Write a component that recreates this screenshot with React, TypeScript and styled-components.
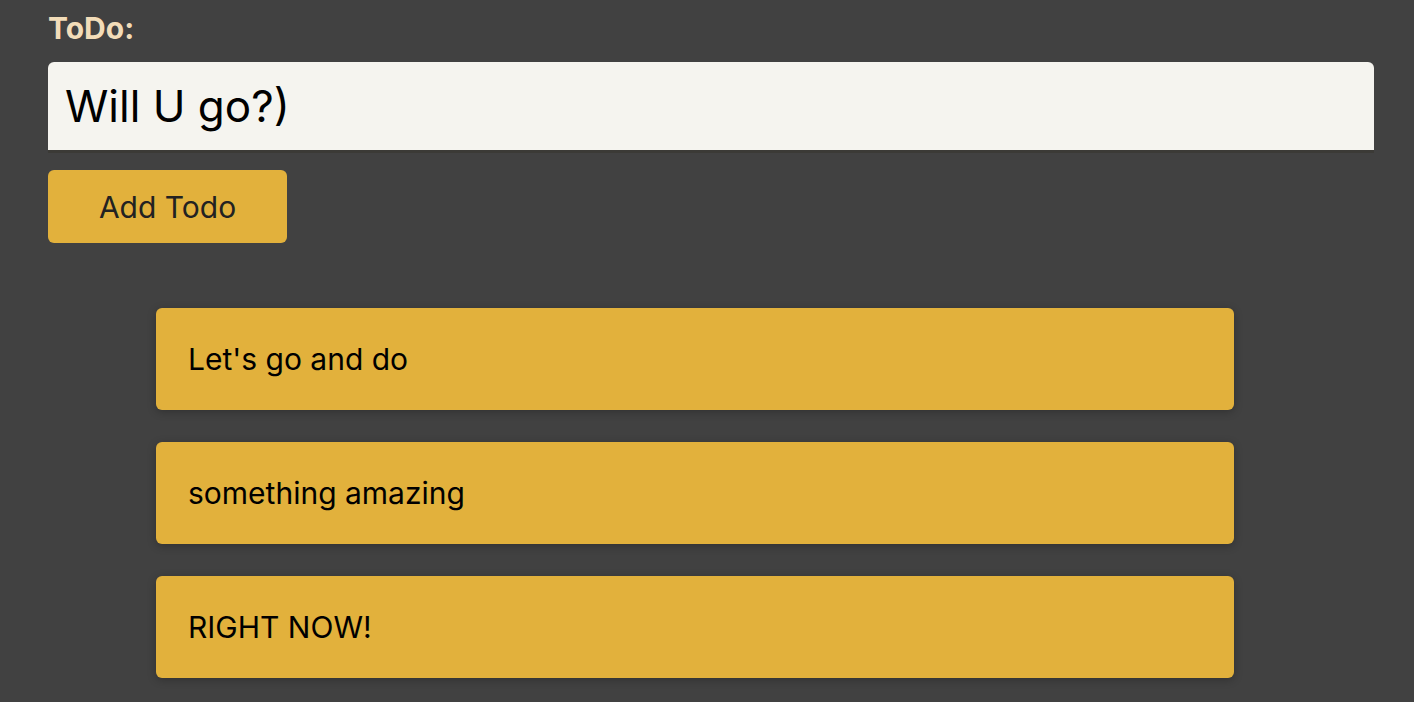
import React from "react";
import styled, { createGlobalStyle } from "styled-components";

const Global = createGlobalStyle`
  html, body { margin: 0; padding: 0; background: #414141; }
  body { font-family: Inter, "Noto Sans", sans-serif; }
`;

const Page = styled.div`
  padding: 8px 40px 24px 48px;
  display: flex;
  flex-direction: column;
`;

const Title = styled.h1`
  margin: 0;
  font-size: 30px;
  line-height: 40px;
  font-weight: 700;
  color: #f2dcb8;
`;

const Input = styled.input`
  margin-top: 14px;
  height: 91px;
  box-sizing: border-box;
  border: none;
  border-bottom: 3px solid #3b3a36;
  border-radius: 6px 6px 0 0;
  background: #f5f4ef;
  padding: 0 17px;
  font-family: Inter, "Noto Sans", sans-serif;
  font-size: 44px;
  color: #000;
  outline: none;
  width: 100%;
`;

const Button = styled.button`
  margin-top: 17px;
  align-self: flex-start;
  width: 239px;
  height: 73px;
  border: none;
  border-radius: 6px;
  background: #e2b13c;
  font-family: Inter, "Noto Sans", sans-serif;
  font-size: 30px;
  color: #222;
`;

const List = styled.ul`
  list-style: none;
  margin: 65px 0 0;
  padding: 0 140px 0 108px;
  display: flex;
  flex-direction: column;
  gap: 32px;
`;

const Card = styled.li`
  height: 102px;
  box-sizing: border-box;
  display: flex;
  align-items: center;
  padding: 0 32px;
  background: #e2b13c;
  border-radius: 6px;
  box-shadow: 0 2px 8px rgba(0, 0, 0, 0.25);
  font-size: 30px;
  color: #000;
`;

const todos = ["Let's go and do", "something amazing", "RIGHT NOW!"];

export default function App() {
  return (
    <>
      <Global />
      <Page>
        <Title>ToDo:</Title>
        <Input defaultValue="Will U go?)" />
        <Button>Add Todo</Button>
        <List>
          {todos.map((t) => (
            <Card key={t}>{t}</Card>
          ))}
        </List>
      </Page>
    </>
  );
}
